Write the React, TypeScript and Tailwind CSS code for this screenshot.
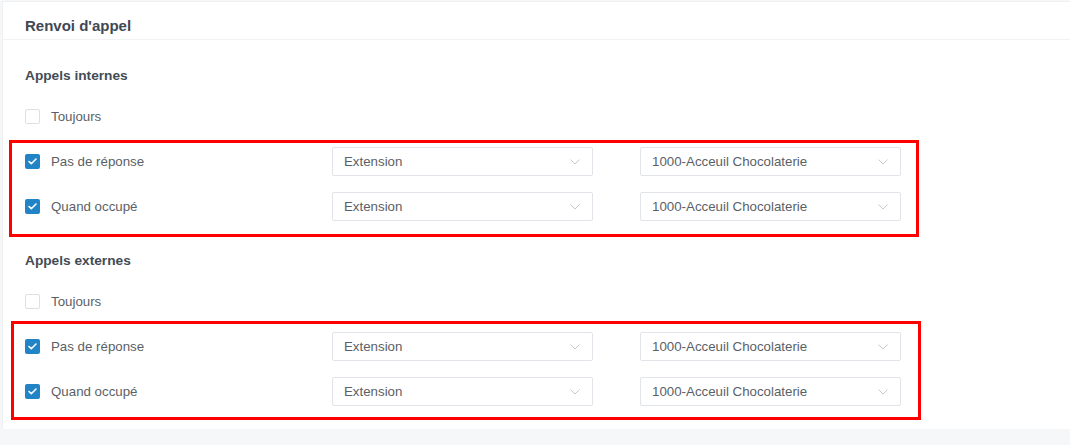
import React from 'react'

type Row = { label: string; checked: boolean }

const font = { fontFamily: '"Liberation Sans", Arial, sans-serif' }

function Checkbox({ checked }: { checked: boolean }) {
  if (checked) {
    return (
      <span className="flex h-[15px] w-[15px] shrink-0 items-center justify-center rounded-[2px] bg-[#2184c6]">
        <svg width="9" height="7" viewBox="0 0 9 7" fill="none">
          <path d="M1 3.5l2.3 2.2L8 1" stroke="#fff" strokeWidth="1.6" strokeLinecap="round" strokeLinejoin="round" />
        </svg>
      </span>
    )
  }
  return <span className="h-[15px] w-[15px] shrink-0 rounded-[2px] border border-[#dcdfe4] bg-white"></span>
}

function Select({ value }: { value: string }) {
  return (
    <div className="flex h-[29px] w-[261px] items-center justify-between rounded-[2px] border border-[#e1e4e8] bg-white pl-[11px] pr-[12px] text-[13.3px] text-[#5b5f66]">
      <span>{value}</span>
      <svg width="10" height="6" viewBox="0 0 10 6" fill="none">
        <path d="M0.5 0.5l4.5 4.5 4.5-4.5" stroke="#c6cad0" strokeWidth="1" />
      </svg>
    </div>
  )
}

function ForwardRow({ label, checked }: Row) {
  return (
    <div className="flex h-[45px] items-center">
      <div className="flex w-[307px] items-center">
        <Checkbox checked={checked} />
        <span className="ml-[11px] text-[13.3px] text-[#5b5f66]">{label}</span>
      </div>
      {checked && (
        <div className="flex items-center gap-[47px]">
          <Select value="Extension" />
          <Select value="1000-Acceuil Chocolaterie" />
        </div>
      )}
    </div>
  )
}

function Section({ title, boxClass, headClass }: { title: string; boxClass: string; headClass: string }) {
  return (
    <div className={headClass}>
      <h3 className="mb-[8px] h-5 text-[13.7px] leading-5 font-bold text-[#434c56]">{title}</h3>
      <ForwardRow label="Toujours" checked={false} />
      <div className="relative">
        <ForwardRow label="Pas de réponse" checked />
        <ForwardRow label="Quand occupé" checked />
        <div className={`pointer-events-none absolute w-[910px] border-[3px] border-[#ff0000] ${boxClass}`}></div>
      </div>
    </div>
  )
}

export default function App() {
  return (
    <div className="min-h-[445px] bg-[#f6f7f8] pl-[2px] pt-px" style={font}>
      <div className="border-l border-t border-[#eef0f2] bg-white">
        <div className="h-[38px] border-b border-[#f0f2f4] pl-[22px] pt-[14px]">
          <h2 className="text-[15px] leading-5 font-bold text-[#3f4853]">Renvoi d'appel</h2>
        </div>
        <div className="pb-[15px] pl-[22px]">
          <Section title="Appels internes" headClass="pt-[26px]" boxClass="-left-[16px] top-[1px] h-[97px]" />
          <Section title="Appels externes" headClass="pt-[22px]" boxClass="-left-[14px] -top-[3px] h-[99px]" />
        </div>
      </div>
    </div>
  )
}
